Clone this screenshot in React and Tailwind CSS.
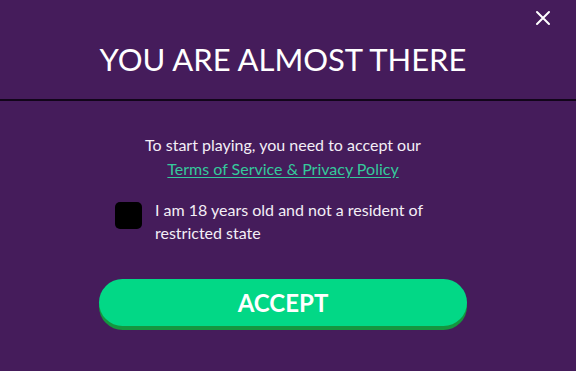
import React, { useState } from 'react';

const App = () => {
  const [checked, setChecked] = useState(false);

  return (
    <div className="w-[576px] h-[371px] bg-[#451c5b] relative overflow-hidden font-['Lato',sans-serif] text-white">
      {/* Close */}
      <button className="absolute top-[10px] right-[25px] w-[16px] h-[16px] flex items-center justify-center">
        <svg viewBox="0 0 16 16" className="w-[16px] h-[16px]" fill="none" stroke="white" strokeWidth="2" strokeLinecap="round">
          <path d="M2 2L14 14M14 2L2 14" />
        </svg>
      </button>

      {/* Header */}
      <div className="h-[99px] flex items-center justify-center pt-[20px] pr-[10px]">
        <h1 className="text-[31px] leading-none">YOU ARE ALMOST THERE</h1>
      </div>
      <div className="h-[2px] bg-[#12051a]"></div>

      {/* Body */}
      <div className="flex flex-col items-center pt-[32px] pr-[10px]">
        <p className="text-[16px] leading-[24px] text-center text-[#f3eef6]">
          To start playing, you need to accept our
          <br />
          <a href="#" className="text-[#35c99b] underline underline-offset-2">Terms of Service &amp; Privacy Policy</a>
        </p>

        <label className="flex items-start gap-[13px] mt-[17px] w-[336px]">
          <span
            onClick={() => setChecked(!checked)}
            className="w-[27px] h-[27px] bg-black rounded-[5px] mt-[4px] shrink-0 flex items-center justify-center"
          >
            {checked && (
              <svg viewBox="0 0 16 16" className="w-[16px] h-[16px]" fill="none" stroke="white" strokeWidth="2">
                <path d="M3 8l3 3 7-7" />
              </svg>
            )}
          </span>
          <span className="text-[16px] leading-[23px] text-[#f3eef6]">
            I am 18 years old and not a resident of restricted state
          </span>
        </label>

        <button className="mt-[35px] w-[368px] h-[47px] rounded-full bg-[#02d886] shadow-[0_4px_0_#14963f] text-white font-bold text-[24px] flex items-center justify-center">
          ACCEPT
        </button>
      </div>
    </div>
  );
};

export default App;
